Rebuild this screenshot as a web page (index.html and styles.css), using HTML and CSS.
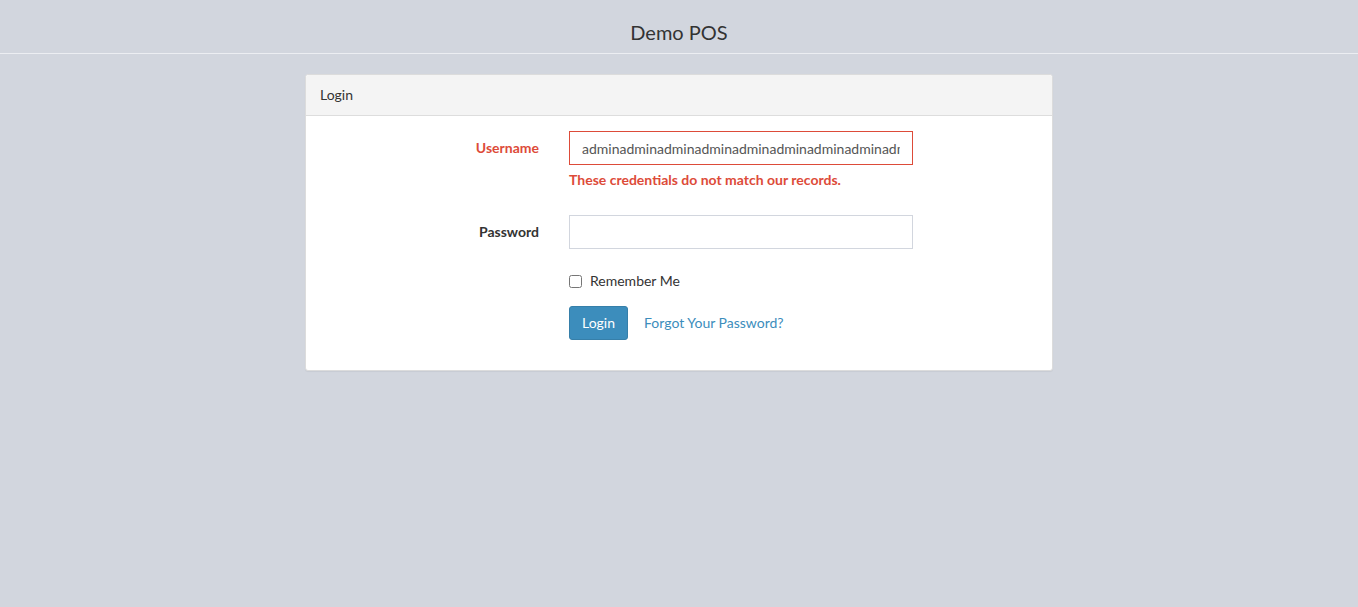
FILE: index.html
```html
<!DOCTYPE html>
<html>
<head>
<meta charset="utf-8">
<title>Demo POS</title>
<link rel="stylesheet" href="styles.css">
</head>
<body>
<header class="topbar"><span class="brand">Demo POS</span></header>
<main class="wrap">
  <section class="panel">
    <div class="panel-heading">Login</div>
    <div class="panel-body">
      <form class="form">
        <div class="group has-error">
          <label class="label" for="u">Username</label>
          <div class="field">
            <input id="u" class="input" type="text" value="adminadminadminadminadminadminadminadminadminadmin">
            <span class="help">These credentials do not match our records.</span>
          </div>
        </div>
        <div class="group">
          <label class="label" for="p">Password</label>
          <div class="field">
            <input id="p" class="input" type="password">
          </div>
        </div>
        <div class="group">
          <div class="label"></div>
          <div class="field">
            <label class="check"><input type="checkbox" class="cb"> Remember Me</label>
          </div>
        </div>
        <div class="group last">
          <div class="label"></div>
          <div class="field actions">
            <button type="button" class="btn">Login</button>
            <a class="link" href="#">Forgot Your Password?</a>
          </div>
        </div>
      </form>
    </div>
  </section>
</main>
</body>
</html>
```
FILE: styles.css
```css
* { box-sizing: border-box; }
html, body { margin: 0; padding: 0; }
body {
  background: #d2d6de;
  font-family: "Lato", "Liberation Sans", sans-serif;
  font-size: 14px;
  line-height: 20px;
  color: #333;
  height: 607px;
}
.topbar {
  height: 54px;
  border-bottom: 1px solid #eceef2;
  display: flex;
  align-items: center;
  justify-content: center;
}
.brand {
  font-size: 20px;
  color: #333;
  padding-top: 10px;
}
.wrap {
  display: flex;
  justify-content: center;
  padding-top: 20px;
}
.panel {
  width: 748px;
  background: #fff;
  border: 1px solid #dcdcdc;
  border-radius: 3px;
  box-shadow: 0 1px 1px rgba(0,0,0,0.05);
}
.panel-heading {
  background: #f4f4f4;
  border-bottom: 1px solid #ddd;
  padding: 10px 14px 10px;
  height: 41px;
  color: #333;
  border-radius: 3px 3px 0 0;
}
.panel-body {
  padding: 15px 0 30px;
}
.group {
  display: flex;
  margin-bottom: 15px;
}
.group.last { margin-bottom: 0; }
.label {
  width: 248px;
  padding-right: 15px;
  text-align: right;
  font-weight: 700;
  padding-top: 7px;
}
.field {
  width: 374px;
  padding-left: 15px;
  padding-right: 15px;
  display: flex;
  flex-direction: column;
}
.input {
  display: block;
  width: 100%;
  height: 34px;
  padding: 6px 12px;
  font-family: inherit;
  font-size: 14px;
  color: #555;
  border: 1px solid #d2d6de;
  border-radius: 0;
  background: #fff;
  outline: none;
}
.has-error .label { color: #dd4b39; }
.has-error .input { border-color: #dd4b39; }
.help {
  display: block;
  margin-top: 5px;
  margin-bottom: 10px;
  color: #dd4b39;
  font-weight: 700;
}
.check {
  display: flex;
  align-items: center;
  padding-top: 7px;
  min-height: 27px;
  font-weight: 400;
}
.cb {
  width: 13px;
  height: 13px;
  margin: 0 8px 0 0;
}
.actions {
  flex-direction: row;
  align-items: center;
}
.btn {
  height: 34px;
  padding: 6px 12px;
  background: #3c8dbc;
  border: 1px solid #367fa9;
  border-radius: 3px;
  color: #fff;
  font-family: inherit;
  font-size: 14px;
  line-height: 20px;
}
.link {
  color: #3c8dbc;
  text-decoration: none;
  margin-left: 16px;
}
```
